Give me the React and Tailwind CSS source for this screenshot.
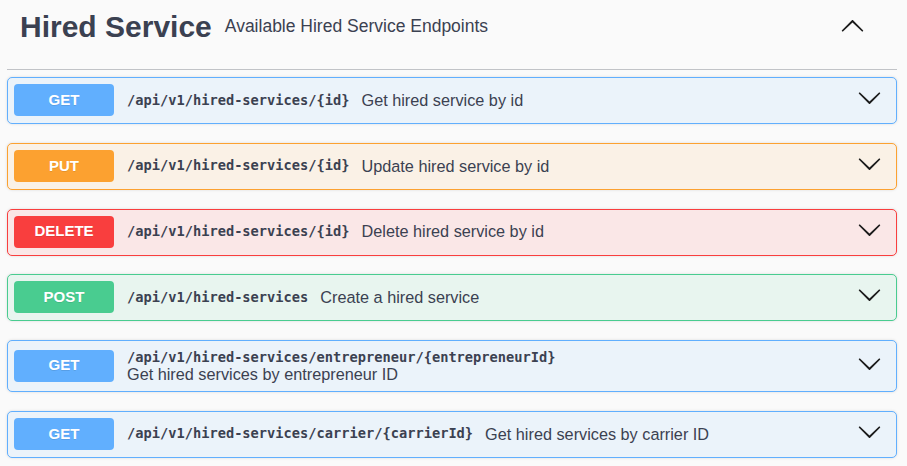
import React from 'react';

const METHODS = {
  GET: { badge: 'bg-[#61affe]', row: 'bg-[#ebf3fa] border-[#61affe]' },
  PUT: { badge: 'bg-[#fca130]', row: 'bg-[#faf1e6] border-[#fca130]' },
  DELETE: { badge: 'bg-[#f93e3e]', row: 'bg-[#fae7e7] border-[#f93e3e]' },
  POST: { badge: 'bg-[#49cc90]', row: 'bg-[#e8f5ef] border-[#49cc90]' },
};

const ops = [
  { method: 'GET', path: '/api/v1/hired-services/{id}', summary: 'Get hired service by id' },
  { method: 'PUT', path: '/api/v1/hired-services/{id}', summary: 'Update hired service by id' },
  { method: 'DELETE', path: '/api/v1/hired-services/{id}', summary: 'Delete hired service by id' },
  { method: 'POST', path: '/api/v1/hired-services', summary: 'Create a hired service' },
  { method: 'GET', path: '/api/v1/hired-services/entrepreneur/{entrepreneurId}', summary: 'Get hired services by entrepreneur ID', wrap: true },
  { method: 'GET', path: '/api/v1/hired-services/carrier/{carrierId}', summary: 'Get hired services by carrier ID' },
];

function Arrow({ up = false, className = '' }) {
  return (
    <svg viewBox="0 0 20 20" width="25" height="25" className={`${up ? 'rotate-180' : ''} ${className}`} fill="#1b1b1b">
      <path d="M17.418 6.109c.272-.268.709-.268.979 0s.271.701 0 .969l-7.908 7.83c-.27.268-.707.268-.979 0l-7.908-7.83c-.27-.268-.27-.701 0-.969.271-.268.709-.268.979 0L10 13.25l7.418-7.141z" />
    </svg>
  );
}

function Operation({ op }) {
  const style = METHODS[op.method];
  return (
    <div className={`flex items-center min-h-[47px] pl-[6px] pr-[14px] pt-[6px] pb-[7px] border rounded-[5px] shadow-[0_0_3px_rgba(0,0,0,0.12)] mb-[18.75px] ${style.row}`}>
      <div className={`w-[100px] h-[32px] shrink-0 rounded-[4px] flex items-center justify-center text-white text-[15px] font-bold [text-shadow:0_1px_0_rgba(0,0,0,0.1)] ${style.badge}`}>
        {op.method}
      </div>
      {op.wrap ? (
        <div className="flex-1 pl-[13px] pt-[2px]">
          <div className="font-['DejaVu_Sans_Mono',monospace] font-bold text-[13.7px] leading-[16px]">{op.path}</div>
          <div className="text-[16.25px] leading-[19px]">{op.summary}</div>
        </div>
      ) : (
        <div className="flex-1 flex items-center pl-[13px]">
          <span className="font-['DejaVu_Sans_Mono',monospace] font-bold text-[13.7px] pr-[12px]">{op.path}</span>
          <span className="text-[16.25px]">{op.summary}</span>
        </div>
      )}
      <Arrow className="-mt-[5px] shrink-0" />
    </div>
  );
}

export default function App() {
  return (
    <div className="min-h-screen bg-[#fafafa] font-['Liberation_Sans',Arial,sans-serif] text-[#3b4151] pl-[7px] pr-[10px]">
      <div className="flex items-center h-[70px] pb-[16px] border-b border-[#c1c3c7]">
        <span className="pl-[13px] text-[30px] font-bold leading-[34px]">Hired Service</span>
        <span className="flex-1 pl-[13px] text-[17.5px]">Available Hired Service Endpoints</span>
        <Arrow up className="mr-[32px]" />
      </div>
      <div className="mt-[7px]">
        {ops.map((op, i) => (
          <Operation key={i} op={op} />
        ))}
      </div>
    </div>
  );
}
